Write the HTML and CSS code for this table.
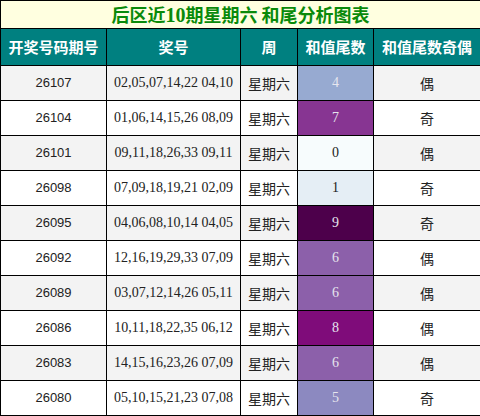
FILE: index.html
```html
<!DOCTYPE html>
<html lang="zh-CN">
<head>
  <meta charset="UTF-8" />
  <title>后区近10期星期六 和尾分析图表</title>
  <link rel="stylesheet" href="styles.css">
</head>
<body>
  <table class="chart">
    <colgroup>
      <col class="c-issue">
      <col class="c-nums">
      <col class="c-week">
      <col class="c-tail">
      <col class="c-odd">
    </colgroup>
    <tr class="title-row">
      <td colspan="5">后区近<span class="num">10</span>期星期六 和尾分析图表</td>
    </tr>
    <tr class="head-row">
      <th>开奖号码期号</th>
      <th>奖号</th>
      <th>周</th>
      <th>和值尾数</th>
      <th>和值尾数奇偶</th>
    </tr>
    <tr class="row odd">
      <td class="issue">26107</td><td class="nums">02,05,07,14,22 04,10</td><td>星期六</td><td class="tail light t4">4</td><td>偶</td>
    </tr>
    <tr class="row">
      <td class="issue">26104</td><td class="nums">01,06,14,15,26 08,09</td><td>星期六</td><td class="tail light t7">7</td><td>奇</td>
    </tr>
    <tr class="row odd">
      <td class="issue">26101</td><td class="nums">09,11,18,26,33 09,11</td><td>星期六</td><td class="tail t0">0</td><td>偶</td>
    </tr>
    <tr class="row">
      <td class="issue">26098</td><td class="nums">07,09,18,19,21 02,09</td><td>星期六</td><td class="tail t1">1</td><td>奇</td>
    </tr>
    <tr class="row odd">
      <td class="issue">26095</td><td class="nums">04,06,08,10,14 04,05</td><td>星期六</td><td class="tail light t9">9</td><td>奇</td>
    </tr>
    <tr class="row">
      <td class="issue">26092</td><td class="nums">12,16,19,29,33 07,09</td><td>星期六</td><td class="tail light t6">6</td><td>偶</td>
    </tr>
    <tr class="row odd">
      <td class="issue">26089</td><td class="nums">03,07,12,14,26 05,11</td><td>星期六</td><td class="tail light t6">6</td><td>偶</td>
    </tr>
    <tr class="row">
      <td class="issue">26086</td><td class="nums">10,11,18,22,35 06,12</td><td>星期六</td><td class="tail light t8">8</td><td>偶</td>
    </tr>
    <tr class="row odd">
      <td class="issue">26083</td><td class="nums">14,15,16,23,26 07,09</td><td>星期六</td><td class="tail light t6">6</td><td>偶</td>
    </tr>
    <tr class="row">
      <td class="issue">26080</td><td class="nums">05,10,15,21,23 07,08</td><td>星期六</td><td class="tail light t5">5</td><td>奇</td>
    </tr>
  </table>
</body>
</html>
```

FILE: styles.css
```css
body {
  margin: 0;
  background: #ffffff;
  font-family: "Noto Sans CJK SC", "Liberation Sans", sans-serif;
}
.chart {
  width: 480px;
  table-layout: fixed;
  border-collapse: collapse;
  color: #222222;
}
.c-issue { width: 106px; }
.c-nums { width: 134px; }
.c-week { width: 57px; }
.c-tail { width: 76px; }
.c-odd { width: 107px; }

.chart td,
.chart th {
  border: 1px solid #000000;
  text-align: center;
  padding: 0;
  white-space: nowrap;
  overflow: hidden;
}

/* title */
.title-row td {
  height: 26px;
  background: #ffffe0;
  color: #0a8a0a;
  font-size: 18px;
  font-weight: bold;
  line-height: 26px;
}
.title-row .num {
  font-family: "Liberation Serif", serif;
  font-size: 20px;
}

/* header */
.head-row th {
  height: 36px;
  background: #008080;
  color: #ffffff;
  font-size: 15px;
  font-weight: bold;
  line-height: 20px;
}

/* data rows */
.row td {
  height: 34px;
  font-size: 14px;
  line-height: 20px;
}
.row.odd td {
  background: #f3f3f3;
}
.row .issue {
  font-family: "Liberation Sans", sans-serif;
  font-size: 13px;
}
.row .nums,
.row .tail {
  font-family: "Liberation Serif", serif;
  font-size: 14px;
}
.row .tail.light { color: #e6e6ee; }
.row td.t0 { background: #f7fcfd; }
.row td.t1 { background: #e5eef5; }
.row td.t4 { background: #97aad1; }
.row td.t5 { background: #8c89c0; }
.row td.t6 { background: #8c60aa; }
.row td.t7 { background: #873592; }
.row td.t8 { background: #7f0c7a; }
.row td.t9 { background: #4d004b; }
```
